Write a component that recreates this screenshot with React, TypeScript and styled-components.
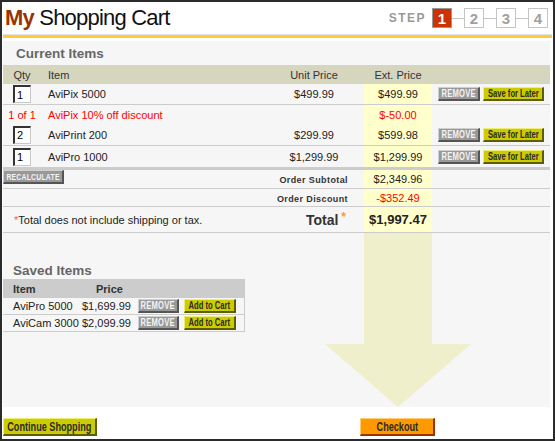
import React from "react";
import styled, { createGlobalStyle } from "styled-components";

const GlobalStyle = createGlobalStyle`
  html, body {
    margin: 0;
    padding: 0;
    background: #fff;
  }
  body {
    font-family: "Liberation Sans", Arial, sans-serif;
    font-size: 11px;
    color: #222;
  }
`;

const Frame = styled.div`
  width: 555px;
  height: 441px;
  box-sizing: border-box;
  border: 2px solid #2b2b2b;
  background: #fff;
  display: flex;
  flex-direction: column;
  overflow: hidden;
`;

const Header = styled.header`
  height: 32px;
  display: flex;
  align-items: center;
  justify-content: space-between;
  padding: 0 5px 0 3px;
`;

const Title = styled.h1`
  margin: 0;
  font-family: "Liberation Sans", Arial, sans-serif;
  font-size: 22px;
  font-weight: normal;
  letter-spacing: -0.8px;
  color: #111;

  strong {
    color: #993300;
    font-weight: bold;
  }
`;

const Steps = styled.div`
  display: flex;
  align-items: center;
`;

const StepLabel = styled.span`
  font-size: 12px;
  font-weight: bold;
  letter-spacing: 1.5px;
  color: #999;
  margin-right: 6px;
`;

const StepBox = styled.span<{ $active?: boolean }>`
  width: 20px;
  height: 20px;
  box-sizing: border-box;
  display: flex;
  align-items: center;
  justify-content: center;
  border: 1px solid ${(p) => (p.$active ? "#999" : "#c4c4c4")};
  background: ${(p) => (p.$active ? "#cc3300" : "#fff")};
  color: ${(p) => (p.$active ? "#fff" : "#a0a0a0")};
  font-size: 15px;
  font-weight: bold;
`;

const StepLink = styled.span`
  width: 12px;
  height: 1px;
  background: #c4c4c4;
`;

const Rule = styled.div`
  border-top: 1px solid #e2e2e2;
  height: 3px;
  background: #ffcc33;
  margin: 0 1px;
`;

const Panel = styled.main`
  flex: 1;
  margin: 3px 3px 0 1px;
  background: #f6f6f6;
  display: flex;
  flex-direction: column;
`;

const SectionTitle = styled.h2<{ $pad: number }>`
  margin: 0;
  height: ${(p) => (p.$pad > 11 ? 24 : 18)}px;
  display: flex;
  align-items: center;
  padding-left: ${(p) => p.$pad}px;
  font-size: 13.5px;
  font-weight: bold;
  color: #666;
`;

const CartTable = styled.table`
  width: 547px;
  border-collapse: collapse;
  table-layout: fixed;
`;

const HeadRow = styled.tr<{ $bg: string; $bold?: boolean }>`
  & > td {
    height: 19px;
    padding: 0;
    background: ${(p) => p.$bg};
    color: #333;
    font-weight: ${(p) => (p.$bold ? "bold" : "normal")};
  }
`;

const Row = styled.tr<{ $h: number; $line?: "thin" | "thick" }>`
  & > td {
    height: ${(p) => p.$h}px;
    padding: 0;
    border-bottom: ${(p) =>
      p.$line === "thick" ? "3px solid #cccccc" : p.$line === "thin" ? "1px solid #cccccc" : "none"};
  }
`;

const Cell = styled.td<{ $align?: "left" | "center" | "right"; $pad?: number; $red?: boolean; $top?: boolean }>`
  text-align: ${(p) => p.$align ?? "left"};
  padding-left: ${(p) => (p.$align === "right" ? 0 : p.$pad ?? 0)}px !important;
  padding-right: ${(p) => (p.$align === "right" ? p.$pad ?? 0 : 0)}px !important;
  color: ${(p) => (p.$red ? "#ff0000" : "inherit")};
  vertical-align: ${(p) => (p.$top ? "top" : "middle")};
  white-space: nowrap;
`;

const ExtCell = styled.td<{ $red?: boolean; $big?: boolean }>`
  text-align: center;
  background: #ffffcc;
  color: ${(p) => (p.$red ? "#ff0000" : "#222")};
  font-weight: ${(p) => (p.$big ? "bold" : "normal")};
  font-size: ${(p) => (p.$big ? 13 : 11)}px;
`;

const QtyInput = styled.input`
  width: 18px;
  height: 18px;
  box-sizing: border-box;
  padding: 0 0 0 2px;
  border-style: solid;
  border-width: 2px 1px 1px 2px;
  border-color: #333 #c8c8c8 #c8c8c8 #333;
  background: #fff;
  font-family: "Liberation Sans", Arial, sans-serif;
  font-size: 11px;
  color: #000;
  display: block;
  margin: 0 auto;
`;

const Actions = styled.div<{ $gap: number }>`
  display: flex;
  gap: ${(p) => p.$gap}px;
`;

const palette = {
  grey: { bg: "#999999", light: "#cfcfcf", dark: "#555555", fg: "#f4f4f4" },
  olive: { bg: "#cccc00", light: "#eeee77", dark: "#5c5c00", fg: "#2a2a2a" },
  orange: { bg: "#ff9900", light: "#ffcc77", dark: "#993300", fg: "#2a2a2a" },
};

const Btn = styled.button<{ $kind: keyof typeof palette; $w: number; $h?: number; $size?: number }>`
  width: ${(p) => p.$w}px;
  height: ${(p) => p.$h ?? 14}px;
  box-sizing: border-box;
  padding: 0;
  margin: 0;
  display: flex;
  align-items: center;
  justify-content: center;
  font-family: "Liberation Sans", Arial, sans-serif;
  font-weight: bold;
  font-size: ${(p) => p.$size ?? 10}px;
  letter-spacing: ${(p) => (p.$kind === "grey" ? 0.3 : 0)}px;
  white-space: nowrap;
  cursor: pointer;
  overflow: visible;
  background: ${(p) => palette[p.$kind].bg};
  color: ${(p) => palette[p.$kind].fg};
  border-style: solid;
  border-width: 1px 2px 2px 1px;
  border-color: ${(p) =>
    `${palette[p.$kind].light} ${palette[p.$kind].dark} ${palette[p.$kind].dark} ${palette[p.$kind].light}`};
`;

/* no condensed face installed: squeeze the bold sans horizontally */
const Narrow = styled.span`
  display: inline-block;
  flex: none;
  transform: scaleX(0.76);
`;

const TotalsLabel = styled.span`
  font-size: 9px;
  font-weight: bold;
  letter-spacing: 0.4px;
  color: #333;
`;

const TotalLabel = styled.span`
  font-size: 14px;
  font-weight: bold;
  color: #333;

  sup {
    color: #ff9933;
    font-size: 12px;
    margin-left: 3px;
    vertical-align: 4px;
    line-height: 0;
  }
`;

const Star = styled.span`
  color: #ff6600;
`;

const Lower = styled.div`
  flex: 1;
  display: flex;
`;

const SavedArea = styled.section`
  width: 322px;
  padding-top: 28px;
`;

const SavedTable = styled.table`
  width: 241px;
  border-collapse: collapse;
  table-layout: fixed;
  border-right: 1px solid #cccccc;
`;

const Arrow = styled.svg`
  display: block;
  width: 146px;
  height: 100%;
`;

const Footer = styled.footer`
  height: 32px;
  box-sizing: border-box;
  padding: 11px 0 0 1px;
  display: grid;
  grid-template-columns: 357px 75px;
  align-items: start;
`;

const cartItems = [
  { qty: "1", name: "AviPix 5000", unit: "$499.99", ext: "$499.99" },
  { qty: "2", name: "AviPrint 200", unit: "$299.99", ext: "$599.98", discount: true },
  { qty: "1", name: "AviPro 1000", unit: "$1,299.99", ext: "$1,299.99" },
];

const savedItems = [
  { name: "AviPro 5000", price: "$1,699.99" },
  { name: "AviCam 3000", price: "$2,099.99" },
];

function Button(props: { kind: keyof typeof palette; w: number; h?: number; size?: number; label: string }) {
  const { kind, w, h, size, label } = props;
  return (
    <Btn $kind={kind} $w={w} $h={h} $size={size}>
      <Narrow>{label}</Narrow>
    </Btn>
  );
}

function ItemActions() {
  return (
    <Actions $gap={3}>
      <Button kind="grey" w={42} label="REMOVE" />
      <Button kind="olive" w={61} label="Save for Later" />
    </Actions>
  );
}

export default function App() {
  return (
    <>
      <GlobalStyle />
      <Frame>
        <Header>
          <Title>
            <strong>My</strong> Shopping Cart
          </Title>
          <Steps>
            <StepLabel>STEP</StepLabel>
            <StepBox $active>1</StepBox>
            <StepLink />
            <StepBox>2</StepBox>
            <StepLink />
            <StepBox>3</StepBox>
            <StepLink />
            <StepBox>4</StepBox>
          </Steps>
        </Header>
        <Rule />
        <Panel>
          <SectionTitle $pad={13}>Current Items</SectionTitle>
          <CartTable>
            <colgroup>
              <col style={{ width: 38 }} />
              <col style={{ width: 223 }} />
              <col style={{ width: 100 }} />
              <col style={{ width: 68 }} />
              <col style={{ width: 118 }} />
            </colgroup>
            <tbody>
              <HeadRow $bg="#d6d6be">
                <Cell $align="center">Qty</Cell>
                <Cell $pad={7}>Item</Cell>
                <Cell $align="center">Unit Price</Cell>
                <Cell $align="center">Ext. Price</Cell>
                <Cell />
              </HeadRow>
              {cartItems.map((item, i) => (
                <React.Fragment key={item.name}>
                  {item.discount && (
                    <Row $h={19}>
                      <Cell $align="center" $red>1 of 1</Cell>
                      <Cell $pad={7} $red>AviPix 10% off discount</Cell>
                      <Cell />
                      <ExtCell $red>$-50.00</ExtCell>
                      <Cell />
                    </Row>
                  )}
                  <Row $h={i === 0 ? 20 : 21} $line={i === cartItems.length - 1 ? "thick" : "thin"}>
                    <Cell>
                      <QtyInput defaultValue={item.qty} />
                    </Cell>
                    <Cell $pad={7}>{item.name}</Cell>
                    <Cell $align="center">{item.unit}</Cell>
                    <ExtCell>{item.ext}</ExtCell>
                    <Cell $pad={6}>
                      <ItemActions />
                    </Cell>
                  </Row>
                </React.Fragment>
              ))}
              <Row $h={18} $line="thin">
                <Cell colSpan={2} $top>
                  <Button kind="grey" w={61} size={9} label="RECALCULATE" />
                </Cell>
                <Cell $align="right" $pad={16}>
                  <TotalsLabel>Order Subtotal</TotalsLabel>
                </Cell>
                <ExtCell>$2,349.96</ExtCell>
                <Cell />
              </Row>
              <Row $h={17} $line="thin">
                <Cell colSpan={2} />
                <Cell $align="right" $pad={16}>
                  <TotalsLabel>Order Discount</TotalsLabel>
                </Cell>
                <ExtCell $red>-$352.49</ExtCell>
                <Cell />
              </Row>
              <Row $h={25} $line="thin">
                <Cell colSpan={2} $pad={11}>
                  <Star>*</Star>Total does not include shipping or tax.
                </Cell>
                <Cell $align="right" $pad={18}>
                  <TotalLabel>
                    Total<sup>*</sup>
                  </TotalLabel>
                </Cell>
                <ExtCell $big>$1,997.47</ExtCell>
                <Cell />
              </Row>
            </tbody>
          </CartTable>
          <Lower>
            <SavedArea>
              <SectionTitle $pad={10}>Saved Items</SectionTitle>
              <SavedTable>
                <colgroup>
                  <col style={{ width: 75 }} />
                  <col style={{ width: 57 }} />
                  <col style={{ width: 109 }} />
                </colgroup>
                <tbody>
                  <HeadRow $bg="#cccccc" $bold>
                    <Cell $pad={10}>Item</Cell>
                    <Cell $pad={18}>Price</Cell>
                    <Cell />
                  </HeadRow>
                  {savedItems.map((item) => (
                    <Row key={item.name} $h={16} $line="thin">
                      <Cell $pad={10}>{item.name}</Cell>
                      <Cell $pad={4}>{item.price}</Cell>
                      <Cell $pad={3}>
                        <Actions $gap={5}>
                          <Button kind="grey" w={41} label="REMOVE" />
                          <Button kind="olive" w={52} label="Add to Cart" />
                        </Actions>
                      </Cell>
                    </Row>
                  ))}
                </tbody>
              </SavedTable>
            </SavedArea>
            <Arrow viewBox="0 0 146 174" preserveAspectRatio="none">
              <path d="M39 0 H107 V111 H146 L73 174 L0 111 H39 Z" fill="#efefcc" />
            </Arrow>
          </Lower>
        </Panel>
        <Footer>
          <Button kind="olive" w={94} h={18} size={12} label="Continue Shopping" />
          <Button kind="orange" w={75} h={18} size={12} label="Checkout" />
        </Footer>
      </Frame>
    </>
  );
}
